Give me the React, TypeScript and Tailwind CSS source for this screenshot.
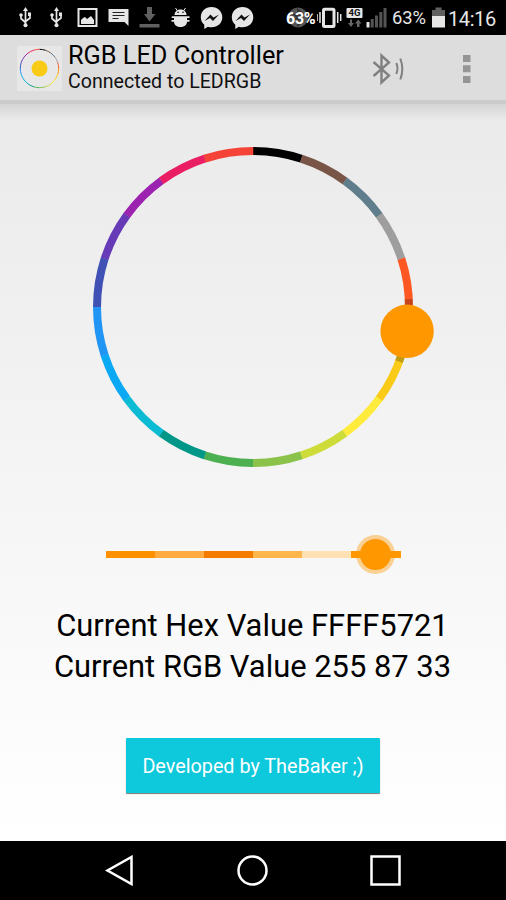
import React from "react";

const wheelColors = [
  "#000000",
  "#795548",
  "#607d8b",
  "#9e9e9e",
  "#ff5721",
  "#ff9800",
  "#f9ca16",
  "#ffeb3b",
  "#cddc39",
  "#8bc34a",
  "#4caf50",
  "#009688",
  "#0bbbd4",
  "#0ba8f4",
  "#2095f3",
  "#3f51b5",
  "#673ab7",
  "#9c22b0",
  "#e91e63",
  "#f64337",
];

export default function App() {
  return (
    <div className="flex h-[900px] w-[506px] flex-col overflow-hidden bg-black font-['Roboto',sans-serif]">
      <StatusBar />
      <ActionBar />
      <main className="flex h-[737px] flex-col items-center bg-linear-to-b from-[#eaeaea] to-white">
        <div className="h-4 w-full bg-linear-to-b from-black/9 to-transparent" />
        <div className="flex h-[405px] w-full justify-center">
          <ColorWheel />
        </div>
        <ShadeSlider />
        <div className="mt-[22px] mr-[1px] flex flex-col items-center text-[30.900px] leading-[41px] text-black">
          <div className="whitespace-nowrap">Current Hex Value FFFF5721</div>
          <div className="whitespace-nowrap">Current RGB Value 255 87 33</div>
        </div>
        <button className="mt-[51px] h-[55px] w-[254px] rounded-[1px] bg-[#0ec8dc] pt-[3px] text-[19.800px] whitespace-nowrap text-white shadow-[0_1px_1px_#777]">
          Developed by TheBaker ;)
        </button>
      </main>
      <NavBar />
    </div>
  );
}

function StatusBar() {
  return (
    <div className="flex h-[35px] shrink-0 items-center bg-black pl-[10px] text-[#e6e6e6]">
      <UsbIcon />
      <UsbIcon />
      <StatusIcon>
        <path fillRule="evenodd" fill="#e6e6e6" d="M5.500 8h20v19h-20zM7.500 10v15h16V10z" />
        <path fill="#e6e6e6" d="M9 24v-4l2-2 2-1 2 2 4-3 3 4v4z" />
      </StatusIcon>
      <StatusIcon>
        <path fill="#e6e6e6" d="M5.500 9h20v17l-4-4h-16z" />
        <path stroke="#222" strokeWidth="1" d="M9.500 12.500h12M9.500 15.500h12M9.500 18.500h6" />
      </StatusIcon>
      <StatusIcon>
        <path fill="#606060" d="M13 7h5v7h3.500l-6 7.500-5.500-7.500H13zM5.500 24h20v3.500h-20z" />
      </StatusIcon>
      <StatusIcon>
        <path stroke="#e6e6e6" strokeWidth="1" d="M10.500 8l2 3M20.500 8l-2 3" />
        <path fill="#e6e6e6" d="M9.500 15c0-7.500 12-7.500 12 0zM7 16.300h17.500V18H22v2h2.500v1.700H22c0 7-13 7-13 0H6.500V20H9v-2H6.500z" />
        <circle cx="13" cy="12.300" r=".8" fill="#000" />
        <circle cx="18" cy="12.300" r=".8" fill="#000" />
      </StatusIcon>
      <MessengerIcon />
      <MessengerIcon />
      <div className="relative ml-[28px] h-[35px] w-[31px]">
        <svg className="h-[35px] w-[31px]" viewBox="0 0 31 35">
          <circle cx="12" cy="17.500" r="10" fill="#555" />
          <path d="M7 14l10 7-5 4V10l5 4-10 7" fill="none" stroke="#333" strokeWidth="2" />
        </svg>
        <span className="absolute top-[8px] left-0 text-[16px] leading-[22px] font-bold tracking-[-0.3px] text-white">
          63%
        </span>
      </div>
      <svg className="h-[35px] w-[102px] shrink-0" viewBox="317 0 102 35" fill="none">
        <path stroke="#e6e6e6" strokeWidth="1.500" d="M317 14v7M320 12v11M337.700 12v11M340.700 14v7" />
        <rect x="323.500" y="9.200" width="10.500" height="17.300" rx="1" stroke="#e6e6e6" strokeWidth="3" />
        <rect x="346.500" y="8" width="16" height="10" rx="1" fill="#e6e6e6" />
        <text x="354.500" y="16" fill="#111" fontSize="9.500" fontWeight="700" textAnchor="middle">
          4G
        </text>
        <path fill="#666" d="M350 19.500h2V23h2l-3 4-3-4h2zM357 27h2.500v-3.500h2l-3.200-4-3.300 4h2z" />
        <path fill="#e6e6e6" d="M366.500 22h3v5.500h-3z" />
        <path fill="#555" d="M370.700 19h3v8.500h-3zM375 15.500h3v12h-3zM379.300 12h3v15.500h-3zM383.500 8h3v19.500h-3z" />
      </svg>
      <div className="ml-[-27px] w-[40px] pt-[1px] text-[18.400px] leading-[34px] tracking-[-0.1px]">63%</div>
      <svg className="h-[35px] w-[14px] shrink-0" viewBox="0.500 0 14 35">
        <path fill="#606060" d="M4 7.500h6V10h3.500v6H.5v-6H4z" />
        <path fill="#e6e6e6" d="M.5 16h13v11.500H.5z" />
      </svg>
      <div className="ml-[2px] pt-[4px] text-[20px] leading-[31px] tracking-[-0.4px]">14:16</div>
    </div>
  );
}

const StatusIcon = ({ children }: { children: React.ReactNode }) => {
  return (
    <svg className="h-[35px] w-[31px] shrink-0" viewBox="0 0 31 35" fill="none">
      {children}
    </svg>
  );
};

const UsbIcon = () => {
  return (
    <StatusIcon>
      <g stroke="#e6e6e6" strokeWidth="1.700">
        <path d="M15.500 10v15M11 15v3.500l4.500 4M20 14v4l-4.500 3.500" />
      </g>
      <path fill="#e6e6e6" d="M15.500 7l2.500 4h-5zM18 12.500h3V16h-3z" />
      <circle cx="11" cy="15" r="1.800" fill="#e6e6e6" />
      <circle cx="15.500" cy="25.200" r="2" fill="#e6e6e6" />
    </StatusIcon>
  );
};

const MessengerIcon = () => {
  return (
    <StatusIcon>
      <path fill="#e6e6e6" d="M15.500 7C9 7 4.800 11.500 4.800 17.300c0 3.200 1.300 5.800 3.500 7.500V29l3.600-2.200c1.100.4 2.300.5 3.600.5 6.300 0 10.800-4.300 10.800-10S21.800 7 15.500 7z" />
      <path fill="#111" d="M8.500 21l6-6.500 3 3 5.500-3-6 6.500-3-3z" />
    </StatusIcon>
  );
};

function ActionBar() {
  return (
    <header className="flex h-[69px] shrink-0 border-b-4 border-[#cbcbcb] bg-[#dddddd]">
      <div className="mt-[11px] ml-[17px] h-[45px] w-[45px] bg-[#e7e7e7]">
        <svg className="h-[45px] w-[45px]" viewBox="231 285 45 45">
          <g transform="translate(253.500 307.500) scale(.123) translate(-253 -307)">
            <WheelRing />
          </g>
          <circle cx="253.500" cy="307.500" r="8" fill="#f9ca16" />
        </svg>
      </div>
      <div className="mt-[7px] ml-[6px] flex w-[304px] flex-col whitespace-nowrap">
        <div className="text-[25.300px] leading-[28px] text-black">RGB LED Controller</div>
        <div className="text-[19.600px] leading-[23px] text-[#111]">Connected to LEDRGB</div>
      </div>
      <svg className="h-[65px] w-[134px]" viewBox="372 35 134 65" fill="none">
        <path stroke="#808080" strokeWidth="2.400" d="M373.500 62l15.500 13.500-7.500 7V55.500l7.500 7L373.500 76" />
        <path stroke="#808080" strokeWidth="2" d="M396.300 63q2.400 5.500 0 11M400.300 58.500q4 10.500 0 21" />
        <path fill="#959595" d="M463 55h7.500v7H463zM463 65.300h7.500v7H463zM463 76h7.500v7H463z" />
      </svg>
    </header>
  );
}

const point = (deg: number) => {
  const a = (deg * Math.PI) / 180;
  return `${253 + 156 * Math.sin(a)} ${307 - 156 * Math.cos(a)}`;
};

const arc = (from: number, to: number) => `M${point(from)}A156 156 0 0 1 ${point(to)}`;

const WheelRing = () => {
  return (
    <g fill="none" strokeWidth="8">
      {wheelColors.map((color, i) => (
        <path key={color} stroke={color} d={arc(i * 18, i * 18 + 18.1)} />
      ))}
    </g>
  );
};

const ColorWheel = () => {
  return (
    <svg className="h-[405px] w-[400px]" viewBox="53 120 400 405">
      <WheelRing />
      <path fill="none" stroke="#000" strokeOpacity=".22" strokeWidth="8" d={arc(87.1, 110.5)} />
      <circle cx="407.100" cy="331.300" r="26.700" fill="#ff9800" />
    </svg>
  );
};

const ShadeSlider = () => {
  return (
    <div className="relative flex h-[58px] w-[295px] items-center">
      <div className="h-[7px] flex-1 bg-[#ff9100]" />
      <div className="h-[7px] flex-1 bg-[#ffab40]" />
      <div className="h-[7px] flex-1 bg-[#f57c00]" />
      <div className="h-[7px] flex-1 bg-[#ffb74d]" />
      <div className="h-[7px] flex-1 bg-[#ffe0b2]" />
      <div className="h-[7px] flex-1 bg-[#ff9800]" />
      <div className="absolute top-[9.500px] left-[250.500px] flex h-[39px] w-[39px] items-center justify-center rounded-full bg-[#ff9800]/40">
        <div className="h-[31px] w-[31px] rounded-full bg-[#ff9800]" />
      </div>
    </div>
  );
};

function NavBar() {
  return (
    <nav className="flex h-[59px] shrink-0 items-center justify-center gap-[102px] bg-black pr-[1px]">
      <svg className="h-[31px] w-[31px]" viewBox="0 0 31 31" fill="none" stroke="#fff" strokeWidth="2.500">
        <path d="M27.500 2v27L3.500 15.500z" />
      </svg>
      <svg className="h-[31px] w-[31px]" viewBox="0 0 31 31" fill="none" stroke="#fff" strokeWidth="2.500">
        <circle cx="15.500" cy="15.500" r="14" />
      </svg>
      <svg className="h-[31px] w-[31px]" viewBox="0 0 31 31" fill="none" stroke="#fff" strokeWidth="2.500">
        <path d="M1.500 1.500h28v28h-28z" />
      </svg>
    </nav>
  );
}
